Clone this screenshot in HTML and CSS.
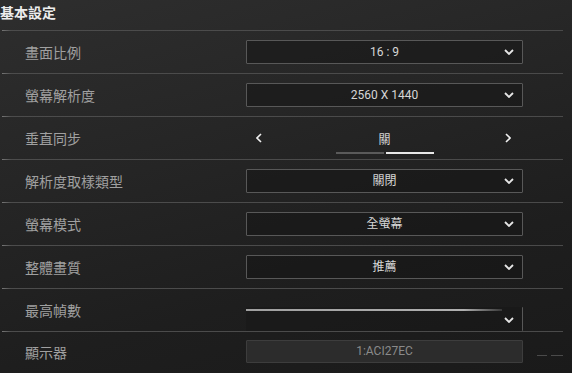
FILE: index.html
```
<!DOCTYPE html>
<html lang="zh-Hant">
<head>
<meta charset="utf-8">
<title>基本設定</title>
<link rel="stylesheet" href="styles.css">
</head>
<body>
<div class="panel">
  <div class="title">基本設定</div>

  <div class="row">
    <div class="label">畫面比例</div>
    <div class="select"><span class="value">16 : 9</span><svg class="chev" viewBox="0 0 10 6" width="10" height="6"><polyline points="1,1 5,5 9,1"/></svg></div>
  </div>

  <div class="row">
    <div class="label">螢幕解析度</div>
    <div class="select"><span class="value">2560 X 1440</span><svg class="chev" viewBox="0 0 10 6" width="10" height="6"><polyline points="1,1 5,5 9,1"/></svg></div>
  </div>

  <div class="row">
    <div class="label">垂直同步</div>
    <div class="stepper">
      <svg class="arrow" viewBox="0 0 6 10" width="6" height="10"><polyline points="5,1 1,5 5,9"/></svg>
      <div class="step-mid">
        <span class="step-value">關</span>
        <div class="step-bar"><span class="seg off"></span><span class="seg on"></span></div>
      </div>
      <svg class="arrow" viewBox="0 0 6 10" width="6" height="10"><polyline points="1,1 5,5 1,9"/></svg>
    </div>
  </div>

  <div class="row">
    <div class="label">解析度取樣類型</div>
    <div class="select"><span class="value">關閉</span><svg class="chev" viewBox="0 0 10 6" width="10" height="6"><polyline points="1,1 5,5 9,1"/></svg></div>
  </div>

  <div class="row">
    <div class="label">螢幕模式</div>
    <div class="select"><span class="value">全螢幕</span><svg class="chev" viewBox="0 0 10 6" width="10" height="6"><polyline points="1,1 5,5 9,1"/></svg></div>
  </div>

  <div class="row">
    <div class="label">整體畫質</div>
    <div class="select"><span class="value">推薦</span><svg class="chev" viewBox="0 0 10 6" width="10" height="6"><polyline points="1,1 5,5 9,1"/></svg></div>
  </div>

  <div class="row">
    <div class="label">最高幀數</div>
    <div class="select partial">
      <div class="slider-line"></div>
      <svg class="chev" viewBox="0 0 10 6" width="10" height="6"><polyline points="1,1 5,5 9,1"/></svg>
    </div>
  </div>

  <div class="row last">
    <div class="label">顯示器</div>
    <div class="select disabled"><span class="value">1:ACI27EC</span></div>
    <div class="ghost-lines"><span class="ghost g1"></span><span class="ghost g2"></span></div>
  </div>
</div>
</body>
</html>
```

FILE: styles.css
```
* { box-sizing: border-box; }

html, body {
  margin: 0;
  padding: 0;
}

body {
  width: 572px;
  height: 373px;
  overflow: hidden;
  background: linear-gradient(165deg, #2e2e2e 0%, #262626 35%, #1e1e1e 70%, #1a1a1a 100%);
  font-family: Roboto, "Noto Sans CJK TC", sans-serif;
}

.panel {
  width: 572px;
  height: 373px;
}

.title {
  height: 30px;
  line-height: 24px;
  font-size: 14px;
  font-weight: bold;
  color: #ececec;
  font-family: "Noto Sans CJK TC", sans-serif;
}

.row {
  position: relative;
  display: grid;
  grid-template-columns: 244px 277px 40px;
  align-items: center;
  height: 43px;
  width: 561px;
  margin-left: 2px;
  border-style: solid;
  border-width: 1px 0 0 0;
  border-image: linear-gradient(to right, #7a7a7a 0px, #4c4c4c 10px, #4a4a4a 100%) 1;
}

.row.last {
  height: 40px;
}

.label {
  padding-left: 23px;
  font-size: 14px;
  color: #a0a0a0;
  font-family: "Noto Sans CJK TC", sans-serif;
  line-height: 20px;
}

.select {
  position: relative;
  height: 24px;
  border: 1px solid #585858;
  border-radius: 1px;
  background: rgba(20, 20, 20, 0.5);
  display: flex;
  align-items: center;
  justify-content: center;
}

.value {
  font-size: 12px;
  color: #d6d6d6;
  line-height: 14px;
  font-family: Roboto, "Noto Sans CJK TC", sans-serif;
}

.chev {
  position: absolute;
  right: 8px;
  top: 8px;
  fill: none;
  stroke: #e6e6e6;
  stroke-width: 1.8;
}

.stepper {
  display: flex;
  align-items: center;
  justify-content: space-between;
  padding: 0 12px 0 10px;
  height: 42px;
}

.arrow {
  fill: none;
  stroke: #f0f0f0;
  stroke-width: 1.6;
}

.step-mid {
  display: flex;
  flex-direction: column;
  align-items: center;
  padding-top: 9px;
  margin-left: 2px;
}

.step-value {
  font-size: 12px;
  line-height: 14px;
  color: #d6d6d6;
  font-family: "Noto Sans CJK TC", sans-serif;
}

.step-bar {
  display: flex;
  gap: 2px;
  margin-top: 6px;
}

.seg {
  display: block;
  width: 48px;
  height: 2px;
}

.seg.off { background: #5a5a5a; }
.seg.on { background: #e8e8e8; }

.select.partial {
  align-self: end;
  border: none;
  border-right: 1px solid #585858;
  background: rgba(20, 20, 20, 0.3);
  height: 24px;
  display: block;
}

.slider-line {
  margin-top: 2px;
  width: 256px;
  height: 2px;
  background: linear-gradient(to right, #a0a0a0 0%, #b0b0b0 85%, rgba(180,180,180,0.2) 100%);
}

.select.partial .chev {
  top: 10px;
}

.select.disabled {
  height: 23px;
  background: #2c2c2c;
  border-color: #3d3d3d;
  margin-top: -1px;
}

.select.disabled .value {
  color: #8a8a8a;
}

.ghost-lines {
  position: absolute;
  right: 0;
  top: 0;
  width: 30px;
  height: 40px;
}

.ghost {
  position: absolute;
  height: 1px;
  background: #4a4a4a;
}

.ghost.g1 { top: 23px; left: 4px; width: 10px; }
.ghost.g2 { top: 23px; left: 18px; width: 12px; }
```
